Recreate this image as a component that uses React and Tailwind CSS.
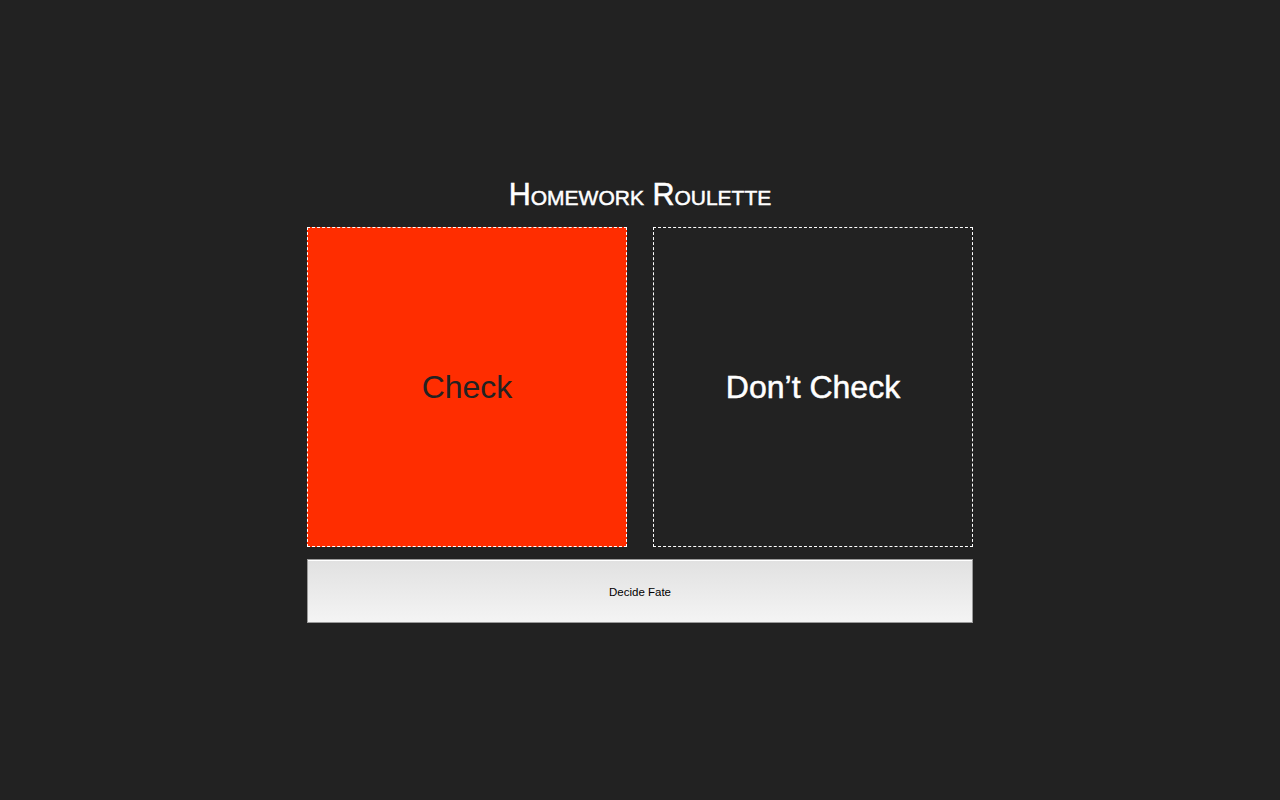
export default function App() {
  return (
    <div
      className="min-h-screen w-full bg-[#222222] flex flex-col items-center pt-[177px]"
      style={{ fontFamily: '"Liberation Sans", Arial, sans-serif' }}
    >
      <h1 className="text-[30.5px] leading-[34px] text-white [font-variant:small-caps] [-webkit-text-stroke:0.5px_white] mb-[16px]">
        Homework Roulette
      </h1>

      <div className="flex gap-[26px]">
        <div className="w-[320px] h-[320px] bg-[#ff2d00] border border-dashed border-white flex items-center justify-center">
          <span className="text-[32px] text-[#222222]">Check</span>
        </div>
        <div className="w-[320px] h-[320px] border border-dashed border-white flex items-center justify-center">
          <span className="text-[32px] text-white [-webkit-text-stroke:0.5px_white]">Don’t Check</span>
        </div>
      </div>

      <button className="mt-[12px] w-[666px] h-[64px] pt-[3px] border border-[#9a9a9a] bg-gradient-to-b from-[#e1e1e1] to-[#f4f4f4] shadow-[inset_0_1px_0_#ffffff] text-[11.5px] text-black flex items-center justify-center">
        Decide Fate
      </button>
    </div>
  );
}
